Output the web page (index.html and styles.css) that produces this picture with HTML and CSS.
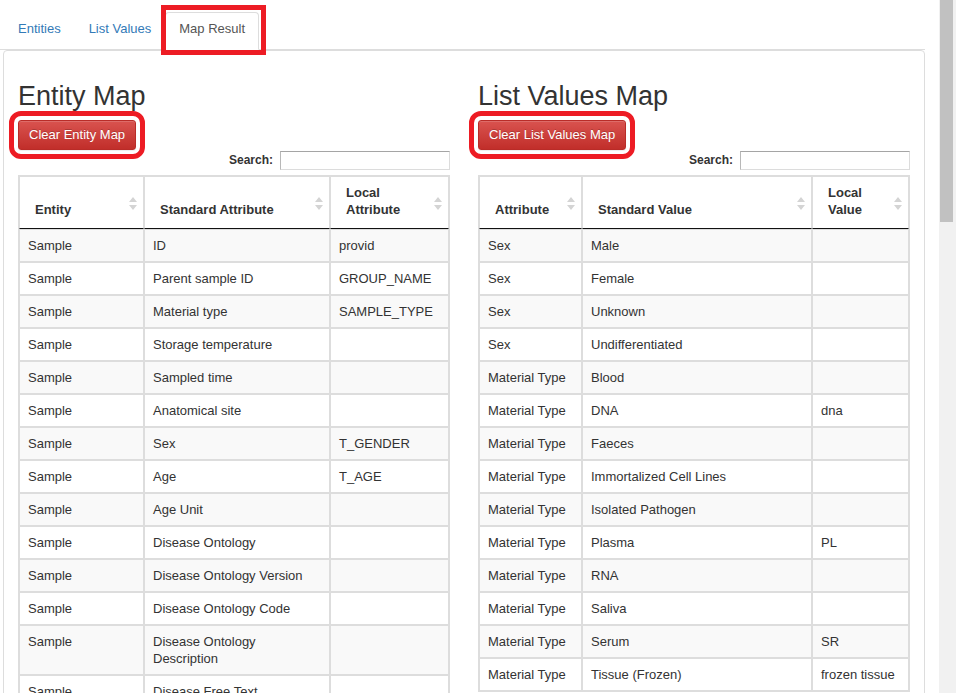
FILE: index.html
```html
<!DOCTYPE html>
<html>
<head>
<meta charset="utf-8">
<title>Map Result</title>
<link rel="stylesheet" href="styles.css">
</head>
<body>
<div class="page">
  <ul class="tabs">
    <li><a class="tab">Entities</a></li>
    <li><a class="tab">List Values</a></li>
    <li><a class="tab active">Map Result</a></li>
  </ul>
  <div class="panel">
    <div class="cols">
      <section class="col">
        <h2>Entity Map</h2>
        <button class="btn">Clear Entity Map</button>
        <div class="filter"><label>Search:</label><input class="search" type="text"></div>
        <table class="grid">
          <thead>
            <tr>
              <th class="e1">Entity<svg class="sort" width="8" height="13" viewBox="0 0 8 13"><path d="M4 0L8 5H0Z M0 8H8L4 13Z"/></svg></th>
              <th class="e2">Standard Attribute<svg class="sort" width="8" height="13" viewBox="0 0 8 13"><path d="M4 0L8 5H0Z M0 8H8L4 13Z"/></svg></th>
              <th class="e3">Local Attribute<svg class="sort" width="8" height="13" viewBox="0 0 8 13"><path d="M4 0L8 5H0Z M0 8H8L4 13Z"/></svg></th>
            </tr>
          </thead>
          <tbody>
            <tr><td>Sample</td><td>ID</td><td>provid</td></tr>
            <tr><td>Sample</td><td>Parent sample ID</td><td>GROUP_NAME</td></tr>
            <tr><td>Sample</td><td>Material type</td><td>SAMPLE_TYPE</td></tr>
            <tr><td>Sample</td><td>Storage temperature</td><td></td></tr>
            <tr><td>Sample</td><td>Sampled time</td><td></td></tr>
            <tr><td>Sample</td><td>Anatomical site</td><td></td></tr>
            <tr><td>Sample</td><td>Sex</td><td>T_GENDER</td></tr>
            <tr><td>Sample</td><td>Age</td><td>T_AGE</td></tr>
            <tr><td>Sample</td><td>Age Unit</td><td></td></tr>
            <tr><td>Sample</td><td>Disease Ontology</td><td></td></tr>
            <tr><td>Sample</td><td>Disease Ontology Version</td><td></td></tr>
            <tr><td>Sample</td><td>Disease Ontology Code</td><td></td></tr>
            <tr><td>Sample</td><td>Disease Ontology Description</td><td></td></tr>
            <tr><td>Sample</td><td>Disease Free Text</td><td></td></tr>
          </tbody>
        </table>
      </section>
      <section class="col">
        <h2>List Values Map</h2>
        <button class="btn">Clear List Values Map</button>
        <div class="filter"><label>Search:</label><input class="search" type="text"></div>
        <table class="grid">
          <thead>
            <tr>
              <th class="l1">Attribute<svg class="sort" width="8" height="13" viewBox="0 0 8 13"><path d="M4 0L8 5H0Z M0 8H8L4 13Z"/></svg></th>
              <th class="l2">Standard Value<svg class="sort" width="8" height="13" viewBox="0 0 8 13"><path d="M4 0L8 5H0Z M0 8H8L4 13Z"/></svg></th>
              <th class="l3">Local Value<svg class="sort" width="8" height="13" viewBox="0 0 8 13"><path d="M4 0L8 5H0Z M0 8H8L4 13Z"/></svg></th>
            </tr>
          </thead>
          <tbody>
            <tr><td>Sex</td><td>Male</td><td></td></tr>
            <tr><td>Sex</td><td>Female</td><td></td></tr>
            <tr><td>Sex</td><td>Unknown</td><td></td></tr>
            <tr><td>Sex</td><td>Undifferentiated</td><td></td></tr>
            <tr><td>Material Type</td><td>Blood</td><td></td></tr>
            <tr><td>Material Type</td><td>DNA</td><td>dna</td></tr>
            <tr><td>Material Type</td><td>Faeces</td><td></td></tr>
            <tr><td>Material Type</td><td>Immortalized Cell Lines</td><td></td></tr>
            <tr><td>Material Type</td><td>Isolated Pathogen</td><td></td></tr>
            <tr><td>Material Type</td><td>Plasma</td><td>PL</td></tr>
            <tr><td>Material Type</td><td>RNA</td><td></td></tr>
            <tr><td>Material Type</td><td>Saliva</td><td></td></tr>
            <tr><td>Material Type</td><td>Serum</td><td>SR</td></tr>
            <tr><td>Material Type</td><td>Tissue (Frozen)</td><td>frozen tissue</td></tr>
          </tbody>
        </table>
      </section>
    </div>
  </div>
</div>
<div class="scrollbar"><div class="thumb"></div></div>
</body>
</html>
```

FILE: styles.css
```css
* { box-sizing: border-box; }
html, body { margin: 0; padding: 0; overflow: hidden; background: #fff; }
body {
  font-family: "Liberation Sans", Arial, sans-serif;
  font-size: 13px;
  line-height: 17px;
  color: #333;
}
.page { width: 925px; }

.tabs {
  list-style: none;
  margin: 0;
  padding: 12px 0 0 4px;
  display: flex;
  border-bottom: 1px solid #ddd;
}
.tabs li { margin-bottom: -1px; }
.tab {
  position: relative;
  display: block;
  padding: 6px 13px 10px;
  line-height: 20px;
  border: 1px solid transparent;
  border-radius: 4px 4px 0 0;
  color: #337ab7;
}
.tab.active {
  color: #555;
  background: #fff;
  border-color: #ddd #ddd transparent;
}
.tab.active::after {
  content: "";
  position: absolute;
  left: -5px;
  top: -8px;
  right: -8px;
  bottom: -6px;
  border: 5px solid #ed1c24;
}

.panel {
  margin-left: 3px;
  border: 1px solid #ddd;
  border-radius: 4px;
  padding: 8px 14px 20px;
}
.cols {
  display: grid;
  grid-template-columns: 432px 432px;
  column-gap: 28px;
}
.col h2 {
  margin: 21px 0 7px;
  font-size: 27px;
  line-height: 33px;
  font-weight: 500;
  color: #333;
}
.btn {
  display: block;
  height: 30px;
  padding: 5px 10px;
  font-family: inherit;
  font-size: 13px;
  line-height: 18px;
  color: #fff;
  border: 1px solid #b92c28;
  border-radius: 3px;
  background: linear-gradient(to bottom, #d9534f 0%, #c12e2a 100%);
  box-shadow: inset 0 1px 0 rgba(255,255,255,.15), 0 1px 1px rgba(0,0,0,.075);
  text-shadow: 0 -1px 0 rgba(0,0,0,.2);
  outline: 5px solid #ed1c24;
  outline-offset: 4px;
}
.filter {
  display: flex;
  justify-content: flex-end;
  align-items: center;
  height: 20px;
}
.filter label {
  font-weight: bold;
  font-size: 12px;
  margin-right: 7px;
}
.search {
  width: 170px;
  height: 19px;
  margin: 0;
  padding: 1px 2px;
  border: 1px solid;
  border-color: #a5a5a5 #dcdcdc #dcdcdc #b8b8b8;
  background: #fff;
}

.grid {
  margin-top: 5px;
  width: 432px;
  table-layout: fixed;
  border-collapse: separate;
  border-spacing: 0;
  border: 1px solid #ddd;
}
.grid th {
  position: relative;
  padding: 7px 26px 10px 15px;
  border: 1px solid #ddd;
  border-bottom-color: #111;
  text-align: left;
  vertical-align: bottom;
  font-weight: bold;
  line-height: 17px;
}
.grid td {
  padding: 7px 8px;
  border: 1px solid #ddd;
  vertical-align: top;
}
.grid tbody tr:nth-child(odd) td { background: #f9f9f9; }
.e1 { width: 125px; }
.e2 { width: 186px; }
.e3 { width: 119px; }
.l1 { width: 103px; }
.l2 { width: 230px; }
.l3 { width: 97px; }
.sort {
  position: absolute;
  right: 6px;
  top: 50%;
  margin-top: -6px;
  fill: #d4d4d4;
}

.scrollbar {
  position: fixed;
  top: 0;
  right: 0;
  width: 17px;
  height: 100%;
  background: #f1f1f1;
}
.thumb {
  margin-left: 1px;
  width: 13px;
  height: 222px;
  background: #c1c1c1;
}
```
